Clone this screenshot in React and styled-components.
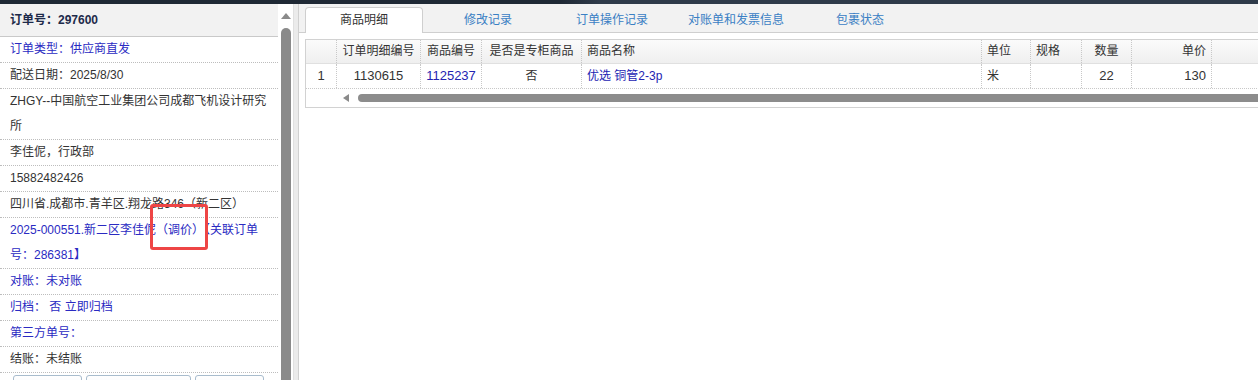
import React from 'react'
import styled, { createGlobalStyle } from 'styled-components'

const GlobalStyle = createGlobalStyle`
    html, body {
        margin: 0;
        padding: 0;
        background: #fff;
    }
    body {
        font-family: Arial, "Liberation Sans", "Noto Sans CJK SC", sans-serif;
        font-size: 12px;
        color: #333;
    }
    * {
        box-sizing: border-box;
    }
`

const info = [
    { text: '订单类型：供应商直发', blue: true },
    { text: '配送日期：2025/8/30' },
    { text: 'ZHGY--中国航空工业集团公司成都飞机设计研究所' },
    { text: '李佳伲，行政部' },
    { text: '15882482426' },
    { text: '四川省.成都市.青羊区.翔龙路346（新二区）' },
    { text: '2025-000551.新二区李佳伲（调价）【关联订单号：286381】', blue: true, mark: true },
    { text: '对账：未对账', blue: true },
    { text: '归档： 否 立即归档', blue: true },
    { text: '第三方单号：', blue: true },
    { text: '结账：未结账' },
]

const tabs = ['商品明细', '修改记录', '订单操作记录', '对账单和发票信息', '包裹状态']

const columns = [
    { title: '', width: 31, align: 'center' },
    { title: '订单明细编号', width: 84, align: 'center' },
    { title: '商品编号', width: 61, align: 'center' },
    { title: '是否是专柜商品', width: 100, align: 'center' },
    { title: '商品名称', width: 400, align: 'left' },
    { title: '单位', width: 49, align: 'left' },
    { title: '规格', width: 51, align: 'left' },
    { title: '数量', width: 50, align: 'center' },
    { title: '单价', width: 80, align: 'right' },
    { title: '', width: 160, align: 'left' },
]

const row = [
    { text: '1' },
    { text: '1130615' },
    { text: '1125237', link: true },
    { text: '否', cjk: true },
    { text: '优选 铜管2-3p', link: true, cjk: true },
    { text: '米', cjk: true },
    { text: '' },
    { text: '22' },
    { text: '130' },
    { text: '' },
]

const gridCols = columns.map(c => c.width + 'px').join(' ')

function App() {
    return (
        <Page>
            <GlobalStyle />
            <TopStrip />
            <Main>
                <LeftPanel>
                    <OrderHeader>订单号：297600</OrderHeader>
                    {info.map((item, i) => (
                        <InfoRow key={i} $blue={item.blue}>
                            {item.text}
                            {item.mark && <MarkBox />}
                        </InfoRow>
                    ))}
                    <ButtonRow>
                        <SmallButton $w={69} />
                        <SmallButton $w={105} />
                        <SmallButton $w={69} />
                    </ButtonRow>
                </LeftPanel>
                <ScrollTrack>
                    <UpArrow />
                    <VThumb />
                </ScrollTrack>
                <Divider />
                <RightPanel>
                    <TabBar>
                        {tabs.map((t, i) => (
                            <Tab key={t} $active={i === 0}>{t}</Tab>
                        ))}
                    </TabBar>
                    <Table>
                        <HeadRow>
                            {columns.map((c, i) => (
                                <HeadCell key={i} $align={c.align}>{c.title}</HeadCell>
                            ))}
                        </HeadRow>
                        <DataRow>
                            {row.map((c, i) => (
                                <DataCell key={i} $align={columns[i].align} $link={c.link} $cjk={c.cjk}>
                                    {c.text}
                                </DataCell>
                            ))}
                        </DataRow>
                        <HScrollRow>
                            <LeftArrow />
                            <HThumb />
                        </HScrollRow>
                    </Table>
                </RightPanel>
            </Main>
        </Page>
    )
}

export default App

const Page = styled.div`
    width: 1258px;
    height: 380px;
    overflow: hidden;
    display: flex;
    flex-direction: column;
`

const TopStrip = styled.div`
    height: 4px;
    flex: none;
    background: linear-gradient(to right, #1f2935 0, #1f2935 560px, #2f3b4a 600px, #2f3b4a 100%);
`

const Main = styled.div`
    flex: 1;
    display: flex;
    min-height: 0;
`

const LeftPanel = styled.div`
    width: 278px;
    flex: none;
    overflow: hidden;
    position: relative;
`

const OrderHeader = styled.div`
    height: 33px;
    line-height: 32px;
    padding-left: 10px;
    background: #f2f2f2;
    border-bottom: 1px solid #c9c9c9;
    font-weight: bold;
    color: #1d2a4a;
`

const InfoRow = styled.div`
    position: relative;
    line-height: 25px;
    padding: 0 6px 0 10px;
    border-bottom: 1px dotted #bdbdbd;
    color: ${p => (p.$blue ? '#2a2ac2' : '#333')};
`

const MarkBox = styled.div`
    position: absolute;
    left: 150px;
    top: -14px;
    width: 58px;
    height: 46px;
    border: 3px solid #ee4545;
    border-radius: 3px;
`

const ButtonRow = styled.div`
    display: flex;
    gap: 4px;
    padding: 2px 0 0 13px;
`

const SmallButton = styled.div`
    width: ${p => p.$w}px;
    height: 24px;
    border: 1px solid #a8bccd;
    border-radius: 3px;
    background: linear-gradient(#ffffff, #eef2f6);
`

const ScrollTrack = styled.div`
    width: 15px;
    flex: none;
    padding: 9px 3px 0 3px;
    display: flex;
    flex-direction: column;
    align-items: center;
    background: #fff;
`

const UpArrow = styled.div`
    width: 0;
    height: 0;
    border-left: 5px solid transparent;
    border-right: 5px solid transparent;
    border-bottom: 6px solid #8a8a8a;
    margin-bottom: 9px;
`

const VThumb = styled.div`
    width: 10px;
    flex: 1;
    background: #8a8a8a;
    border-radius: 5px 5px 0 0;
`

const Divider = styled.div`
    width: 5px;
    flex: none;
    background: #ebebeb;
    border-left: 1px solid #e0e0e0;
`

const RightPanel = styled.div`
    flex: 1;
    min-width: 0;
    overflow: hidden;
    border-left: 1px solid #d0d0d0;
`

const TabBar = styled.div`
    height: 29px;
    display: flex;
    align-items: flex-end;
    gap: 6px;
    padding-left: 6px;
    background: #f2f2f2;
    border-bottom: 1px solid #cfcfcf;
`

const Tab = styled.div`
    width: 118px;
    height: 26px;
    line-height: 25px;
    text-align: center;
    font-size: 12px;
    color: ${p => (p.$active ? '#333' : '#3a80c4')};
    background: ${p => (p.$active ? '#fff' : 'transparent')};
    border: 1px solid ${p => (p.$active ? '#cfcfcf' : 'transparent')};
    border-bottom: none;
    border-radius: 4px 4px 0 0;
    margin-bottom: -1px;
`

const Table = styled.div`
    margin: 6px 0 0 6px;
    width: 1100px;
    border: 1px solid #d2d2d2;
    border-right: none;
    font-size: 13px;
`

const HeadRow = styled.div`
    display: grid;
    grid-template-columns: ${gridCols};
    height: 24px;
    background: linear-gradient(#fbfbfb, #efefef);
    border-bottom: 1px solid #e0e0e0;
    font-size: 12px;
`

const HeadCell = styled.div`
    line-height: 23px;
    padding: 0 5px;
    text-align: ${p => p.$align};
    color: #333;
    border-right: 1px dotted #c8c8c8;
    white-space: nowrap;
    overflow: hidden;
`

const DataRow = styled.div`
    display: grid;
    grid-template-columns: ${gridCols};
    height: 25px;
    border-bottom: 1px dotted #c8c8c8;
`

const DataCell = styled.div`
    line-height: 24px;
    padding: 0 5px;
    font-size: ${p => (p.$cjk ? '12px' : '13px')};
    text-align: ${p => p.$align};
    color: ${p => (p.$link ? '#2323b2' : '#333')};
    border-right: 1px dotted #c8c8c8;
    white-space: nowrap;
    overflow: hidden;
`

const HScrollRow = styled.div`
    height: 18px;
    display: flex;
    align-items: center;
    padding-left: 37px;
`

const LeftArrow = styled.div`
    width: 0;
    height: 0;
    border-top: 4px solid transparent;
    border-bottom: 4px solid transparent;
    border-right: 6px solid #8a8a8a;
    margin-right: 9px;
`

const HThumb = styled.div`
    flex: 1;
    height: 8px;
    background: #8c8c8c;
    border-radius: 4px 0 0 4px;
`
